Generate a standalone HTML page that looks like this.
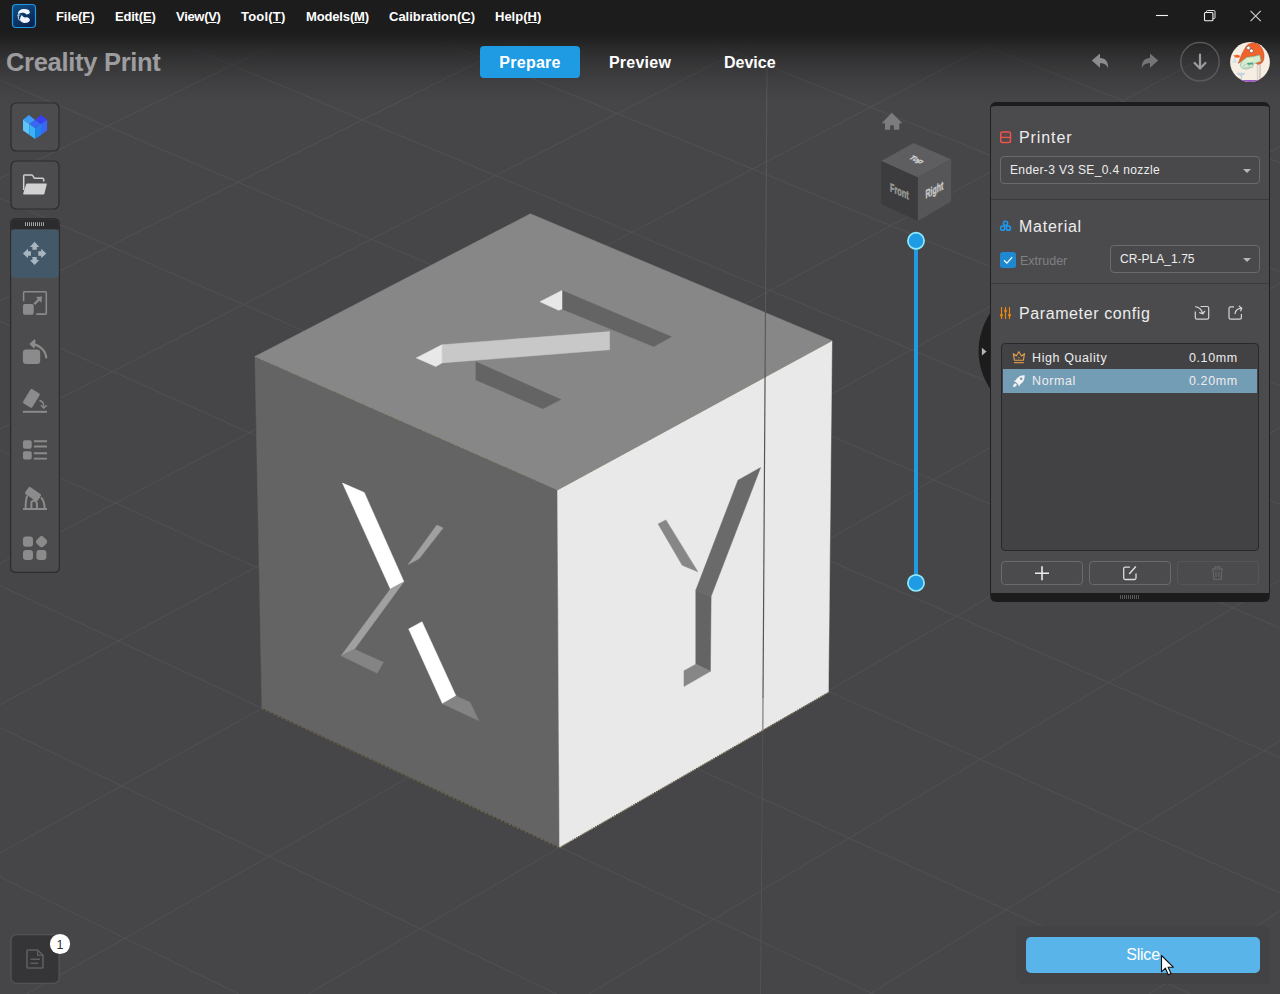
<!DOCTYPE html>
<html lang="en">
<head>
<meta charset="utf-8">
<title>Creality Print</title>
<style>
*{box-sizing:border-box;margin:0;padding:0}
html,body{width:1280px;height:994px;overflow:hidden;background:#464648}
body{position:relative;font-family:"Liberation Sans","Noto Sans CJK SC",sans-serif;color:#e6e6e6;-webkit-font-smoothing:antialiased}
.abs{position:absolute}
#scene{position:absolute;left:0;top:0;width:1280px;height:994px}
#titlebar{position:absolute;left:0;top:0;width:1280px;height:32px;background:#1c1c1d}
#hdrgrad{position:absolute;left:0;top:32px;width:1280px;height:72px;background:linear-gradient(to bottom,rgba(28,28,29,1) 0%,rgba(28,28,29,.86) 11%,rgba(28,28,29,.67) 22%,rgba(28,28,29,.46) 37.5%,rgba(28,28,29,.29) 54%,rgba(28,28,29,.145) 71%,rgba(28,28,29,.05) 87.5%,rgba(28,28,29,0) 100%)}
.menu{position:absolute;top:0;height:32px;line-height:33.4px;font-weight:bold;font-size:13px;color:#fff;white-space:nowrap}
.menu u{text-decoration:underline;text-underline-offset:1px}
#brand{position:absolute;left:6px;top:44px;font-weight:bold;font-size:25.5px;line-height:36px;color:#9d9d9f;white-space:nowrap;letter-spacing:-.3px}
.tab{position:absolute;top:46px;height:32px;line-height:33.4px;font-weight:bold;font-size:16px;color:#fff;text-align:center;white-space:nowrap}
#tabPrepare{left:480px;width:100px;background:#1e9be2;border-radius:4px}
.sbtn{position:absolute;left:11px;width:48px;height:48px;background:#4b4b4d;border:1px solid #2c2c2e;border-radius:5px}
#toolbar{position:absolute;left:11px;top:219px;width:48px;height:353px;background:#4b4b4d;border:1px solid #2c2c2e;border-radius:5px;overflow:hidden}
#toolbar .grip{position:absolute;left:0;top:0;width:46px;height:10px;background:#2a2a2c}
#toolbar .sel{position:absolute;left:0;top:10px;width:46px;height:48px;background:#43596a;border-radius:4px}
#panel{position:absolute;left:990px;top:102px;width:280px;height:500px;background:#4b4b4d;border:1px solid #1f1f21;border-top:4px solid #1c1c1d;border-bottom:9px solid #1c1c1d;border-radius:6px;overflow:visible}
.ptitle{position:absolute;left:28px;font-size:16px;color:#ededed;white-space:nowrap;line-height:20px}
.sep{position:absolute;left:0;width:278px;height:1px;background:#3a3a3c}
.combo{position:absolute;height:28px;border:1px solid #6b6b6d;border-radius:4px;background:#49494b;font-size:12px;line-height:27.5px;color:#ededed;padding-left:9px;white-space:nowrap}
.combo:after{content:"";position:absolute;right:8.3px;top:11.5px;border:4.2px solid transparent;border-top:4.2px solid #b6b6b6;border-bottom:0}
#list{position:absolute;left:10px;top:237px;width:258px;height:208px;background:#424244;border:1px solid #28282a;border-radius:4px}
.row{position:absolute;left:1px;width:254px;height:23.5px;line-height:24px;font-size:12.5px;color:#ededed;letter-spacing:.6px}
.row .n{position:absolute;left:29px;top:0}
.row .v{position:absolute;left:186px;top:0}
.pbtn{position:absolute;top:455px;width:82px;height:24px;border:1px solid #6b6b6d;border-radius:4px}
</style>
</head>
<body>
<svg id="scene" viewBox="0 0 1280 994">
<rect width="1280" height="994" fill="#464648"/>
<path d="M809.3 3461.2L4842.6 -48.2M809.3 3461.2L-4233.6 175.0M589.9 3318.2L4676.3 -98.5M998.6 3296.5L-4050.9 111.8M377.4 3179.8L4513.2 -147.9M1180.6 3138.1L-3872.7 50.1M171.7 3045.7L4353.0 -196.4M1355.7 2985.8L-3698.9 -10.1M-27.8 2915.7L4195.8 -244.0M1524.3 2839.1L-3529.2 -68.8M-221.1 2789.7L4041.5 -290.7M1686.8 2697.7L-3363.6 -126.2M-408.7 2667.5L3889.9 -336.6M1843.4 2561.5L-3201.9 -182.2M-590.7 2548.9L3741.1 -381.6M1994.4 2430.0L-3043.9 -236.9M-767.5 2433.7L3594.9 -425.9M2140.3 2303.1L-2889.5 -290.3M-939.2 2321.8L3451.3 -469.4M2281.2 2180.6L-2738.7 -342.5M-1106.0 2213.1L3310.1 -512.1M2417.3 2062.1L-2591.2 -393.6M-1268.2 2107.4L3171.4 -554.1M2549.0 1947.5L-2447.0 -443.5M-1425.9 2004.6L3035.1 -595.4M2676.4 1836.7L-2305.9 -492.3M-1579.4 1904.6L2901.1 -635.9M2799.8 1729.3L-2167.9 -540.1M-1728.7 1807.3L2769.4 -675.8M2919.2 1625.4L-2032.9 -586.9M-1874.1 1712.6L2639.8 -715.0M3035.0 1524.6L-1900.8 -632.6M-2015.7 1620.3L2512.4 -753.6M3147.3 1426.9L-1771.4 -677.4M-2153.7 1530.4L2387.1 -791.6M3256.2 1332.2L-1644.7 -721.3M-2288.2 1442.7L2263.9 -828.9M3361.9 1240.2L-1520.6 -764.2M-2419.3 1357.3L2142.6 -865.6M3464.5 1151.0L-1399.0 -806.3M-2547.1 1274.0L2023.2 -901.7M3564.2 1064.2L-1279.9 -847.6M-2671.9 1192.7L1905.8 -937.3M3661.0 980.0L-1163.2 -888.0M-2793.6 1113.4L1790.2 -972.3M3755.2 898.1L-1048.8 -927.6M-2912.4 1036.0L1676.5 -1006.7M3846.7 818.4L-936.6 -966.4M-3028.4 960.4L1564.5 -1040.6M3935.8 740.9L-826.6 -1004.5M-3141.7 886.5L1454.2 -1074.0M4022.5 665.4L-718.7 -1041.9M-3252.4 814.4L1345.6 -1106.9M4106.9 592.0L-612.9 -1078.5M-3360.6 743.9L1238.6 -1139.3M4189.1 520.5L-509.0 -1114.5M-3466.3 675.0L1133.3 -1171.1M4269.2 450.8L-407.1 -1149.7M-3569.7 607.6L1029.5 -1202.6M4347.2 382.9L-307.1 -1184.4M-3670.8 541.7L927.3 -1233.5M4423.3 316.7L-208.9 -1218.4M-3769.7 477.3L826.6 -1264.0M4497.5 252.1L-112.5 -1251.8M-3866.5 414.2L727.4 -1294.0M4569.9 189.1L-17.8 -1284.5M-3961.2 352.5L629.6 -1323.7M4640.6 127.6L75.2 -1316.7M-4053.9 292.1L533.2 -1352.8M4709.5 67.6L166.5 -1348.4M-4144.7 233.0L438.1 -1381.6M4776.9 9.1L256.3 -1379.4M-4233.6 175.0L344.5 -1410.0M4842.6 -48.2L344.5 -1410.0" stroke="#515154" stroke-width="1" fill="none"/>
<!-- vertical axis line lower part -->
<path d="M762.8 730L760.5 994" stroke="#535356" stroke-width="1" fill="none"/>
<!-- cube -->
<g id="cube">
<polygon points="254.9,356.5 557.5,489.9 559.5,847.5 261.9,708.3" fill="#646464" stroke="#646464" stroke-width=".5" stroke-linejoin="round"/>
<polygon points="557.5,489.9 832,340.7 828.4,692.3 559.5,847.5" fill="#e9e9e9" stroke="#e9e9e9" stroke-width=".5" stroke-linejoin="round"/>
<polygon points="254.9,356.5 530.4,213.8 832,340.7 557.5,489.9" fill="#878787" stroke="#878787" stroke-width=".5" stroke-linejoin="round"/>
<!-- Z -->
<polygon points="562,290.4 671.4,336.8 653.7,346.6 562,309" fill="#646464" stroke="#646464" stroke-width=".5" stroke-linejoin="round"/>
<polygon points="540,301.7 562,290.4 562,309 558.6,310.3" fill="#e8e8e8" stroke="#e8e8e8" stroke-width=".5" stroke-linejoin="round"/>
<polygon points="441.9,344.8 609.6,331.6 609.6,349.7 441.9,362.9" fill="#c8c8c8" stroke="#c8c8c8" stroke-width=".5" stroke-linejoin="round"/>
<polygon points="416.3,357.9 441.9,344.8 441.9,362.9 435.8,366.5" fill="#e8e8e8" stroke="#e8e8e8" stroke-width=".5" stroke-linejoin="round"/>
<polygon points="475.9,361.8 560.9,399.6 542.7,408.7 475.9,379.9" fill="#646464" stroke="#646464" stroke-width=".5" stroke-linejoin="round"/>
<!-- X -->
<polygon points="342.5,483.1 364.2,492.4 403.9,581.7 390.4,589" fill="#ffffff" stroke="#ffffff" stroke-width=".5" stroke-linejoin="round"/>
<polygon points="436.9,525.1 443.1,527.9 419.2,558.6 408.2,564.5" fill="#a0a0a0" stroke="#a0a0a0" stroke-width=".5" stroke-linejoin="round"/>
<polygon points="390.4,589 403.9,581.7 354.4,649.3 341.1,655.8" fill="#a0a0a0" stroke="#a0a0a0" stroke-width=".5" stroke-linejoin="round"/>
<polygon points="341.1,655.8 354.4,649.3 383.4,662.3 377.2,673.2" fill="#848484" stroke="#848484" stroke-width=".5" stroke-linejoin="round"/>
<polygon points="408.7,629 422,621.7 456,696 442.5,703.7" fill="#ffffff" stroke="#ffffff" stroke-width=".5" stroke-linejoin="round"/>
<polygon points="442.5,703.7 456,696 470.1,702.3 478.6,720.6" fill="#848484" stroke="#848484" stroke-width=".5" stroke-linejoin="round"/>
<!-- Y -->
<polygon points="738,480.2 760.6,467.6 711.1,596.3 695.8,590.3" fill="#6a6a6a" stroke="#6a6a6a" stroke-width=".5" stroke-linejoin="round"/>
<polygon points="658.1,523.9 665.9,519.9 697.8,571.7 682.2,565.2" fill="#878787" stroke="#878787" stroke-width=".5" stroke-linejoin="round"/>
<polygon points="695.8,590.3 711.1,596.3 710.4,671.3 695.8,664.3" fill="#646464" stroke="#646464" stroke-width=".5" stroke-linejoin="round"/>
<polygon points="684,670.8 695.8,664.3 710.4,671.3 684,686.4" fill="#878787" stroke="#878787" stroke-width=".5" stroke-linejoin="round"/>
<path d="M261.900 708.300L559.500 847.500L828.400 692.300" stroke="#4a3a34" stroke-width="1" fill="none" stroke-dasharray="1.1 1.1"/>
<path d="M261.900 708.800L559.500 848L828.400 692.800" stroke="#8e8a2c" stroke-width=".9" fill="none" stroke-dasharray="1 3.400"/>
<path d="M254.900 356.500L557.500 489.900L832 340.700" stroke="#aaa24a" stroke-width=".8" fill="none" stroke-dasharray="1.200 5.500 1.200 2.500" stroke-opacity=".75"/>
</g>
<path d="M767 62L765.1 370" stroke="#58585b" stroke-width="1.1" fill="none"/><path d="M765.1 370L763 698" stroke="#555558" stroke-width="1.2" fill="none"/><path d="M763 698L762.8 730" stroke="#8c8c8c" stroke-width="1.4" fill="none"/>
</svg>
<div id="hdrgrad"></div>
<div id="titlebar"></div>
<svg class="abs" style="left:0;top:0" width="60" height="32" viewBox="0 0 60 32">
<defs><linearGradient id="icg" x1="0" y1="0" x2="0.6" y2="1"><stop offset="0" stop-color="#0f5288"/><stop offset="1" stop-color="#0a2450"/></linearGradient></defs>
<rect x="12.5" y="4.5" width="23" height="23" rx="3.5" fill="url(#icg)" stroke="#1f97ea" stroke-width="1.2"/>
<path d="M18 13.6C18.2 10.9 20.6 9.2 24.2 9.1C27.3 9 29.6 10.2 29.9 12.2C30 13.6 28.3 14.3 26.5 14.5C25.6 13.3 24 12.7 22.2 12.8C20.5 12.9 19 13.5 18.4 14.3Z" fill="#f4f7ff"/>
<path d="M22 15C22.6 16.6 23.8 17.4 25.2 17.4C26 17.4 26.6 17.2 27.2 17.3C28.6 17.6 29.8 18.8 29.9 19.9C29.6 21.6 27.5 22.9 24.8 22.9C22.4 22.9 20.6 21.5 20.1 19.9C19.8 18.3 20.6 16.2 22 15Z" fill="#f0f4ff"/>
<path d="M18.1 14.6L18.5 18.8L19.8 20.6" stroke="#e8eefc" stroke-width="0.9" fill="none"/>
<path d="M17.2 15.4L20.6 14.4M18.2 14.2L19.6 16" stroke="#dfe8fa" stroke-width="0.5" fill="none"/>
</svg>
<div class="menu" style="left:56px;letter-spacing:-.08px">File(<u>F</u>)</div>
<div class="menu" style="left:115px;letter-spacing:-.2px">Edit(<u>E</u>)</div>
<div class="menu" style="left:176px;letter-spacing:-.31px">View(<u>V</u>)</div>
<div class="menu" style="left:241px;letter-spacing:.2px">Tool(<u>T</u>)</div>
<div class="menu" style="left:306px;letter-spacing:-.15px">Models(<u>M</u>)</div>
<div class="menu" style="left:389px">Calibration(<u>C</u>)</div>
<div class="menu" style="left:495px">Help(<u>H</u>)</div>
<svg class="abs" style="left:1140px;top:0" width="140" height="32" viewBox="0 0 140 32" fill="none">
<path d="M16 15.5H28" stroke="#f2f2f2" stroke-width="1.1"/>
<path d="M66.5 12.3V11.6Q66.5 10.5 67.6 10.5H73.9Q75 10.5 75 11.6V17.5Q75 18.6 73.9 18.6H73" stroke="#e2e2e2" stroke-width="1"/>
<rect x="64.5" y="12.5" width="8.4" height="8.3" rx="1" stroke="#f2f2f2" stroke-width="1.1"/>
<path d="M110.5 10.8L120.8 21.2M120.8 10.8L110.5 21.2" stroke="#cfcfcf" stroke-width="1.1"/>
</svg>

<div id="brand">Creality Print</div>
<div class="tab" id="tabPrepare" style="letter-spacing:.25px">Prepare</div>
<div class="tab" style="left:608px;width:64px;letter-spacing:.25px">Preview</div>
<div class="tab" style="left:724px;width:51px">Device</div>
<svg class="abs" style="left:1080px;top:36px" width="200" height="52" viewBox="0 0 200 52">
<!-- undo -->
<path d="M11.8 24.6L20 17.6V22C25.6 22.2 28.4 25.4 28.2 32.6C27 28.9 24.6 27.4 20 27.3V31.7Z" fill="#8c8c8e"/>
<!-- redo -->
<path d="M78.2 24.6L70 17.6V22C64.4 22.2 61.6 25.4 61.8 32.6C63 28.9 65.400 27.4 70 27.3V31.7Z" fill="#747476"/>
<circle cx="120" cy="25.8" r="19.2" fill="none" stroke="#58585a" stroke-width="1.5"/>
<path d="M120 18.6V32M114.6 27L120 32.6L125.400 27" stroke="#9c9c9e" stroke-width="2.2" fill="none" stroke-linecap="round" stroke-linejoin="round"/>
<!-- avatar -->
<defs><clipPath id="avc"><circle cx="170" cy="26" r="19.900"/></clipPath></defs>
<g clip-path="url(#avc)">
<rect x="149" y="5" width="42" height="42" fill="#f6eee3"/>
<path d="M161.9 43.9 L177.9 43.9 L177.9 46.9 L161.9 46.9 Z" fill="#9a5bc2"/>
<path d="M177.4 28.6 L177.4 44.3 M179.3 28.6 L179.3 44.3 M180.5 28.6 L180.5 44.3" stroke="#c9bcbc" stroke-width=".7" fill="none"/>
<path d="M151.6 26.7 L157.6 26.7 L155.4 23.3 L154.0 23.3 Z" fill="#cfdfee"/>
<path d="M154.5 23.3 L155.2 21.1" stroke="#b7a9a0" stroke-width=".5"/>
<path d="M157.1 37.3 L164.8 37.3 L161.4 40.2 Z" fill="#c2dcf0" stroke="#9fb6cc" stroke-width=".4"/>
<path d="M161.4 40.2 L161.4 44.3" stroke="#a9b9c9" stroke-width=".7"/>
<path d="M158.3 27.4 L161.9 17.9 L165.3 11.7 C166.8 8.8 170.2 6.6 174.0 6.8 C178.9 7.3 182.7 11.7 183.9 17.9 C184.6 23.7 182.7 27.6 178.9 28.3 C176.9 28.6 175.7 27.6 176.9 26.2 L179.8 18.9 L173.1 20.8 L166.8 21.3 L161.5 25.2 Z" fill="#f0642c" stroke="#b8441a" stroke-width=".5" stroke-linejoin="round"/>
<path d="M153.2 19.5 L157.4 18.8 L160.7 20.0 L158.8 21.7 L155.4 21.4 L154.5 20.6 Z" fill="#f0642c"/>
<path d="M166.8 21.3 L173.1 20.6 L179.8 18.9 L181.0 25.2 L173.5 27.8 L172.6 31.0 L166.3 33.2 L162.2 32.2 L160.3 29.3 L161.9 25.2 Z" fill="#d3ebcf" stroke="#7fb592" stroke-width=".7" stroke-linejoin="round"/>
<path d="M167.3 22.8 L172.1 22.0 L173.1 24.7 L167.3 25.7 Z" fill="#e4f2c4"/>
<path d="M166.8 27.1 L173.1 26.6 L172.8 28.5 L168.2 28.8 Z" fill="#4a9f83"/>
<path d="M163.9 29.1 C165.3 28.3 169.2 29.1 170.2 30.3 C168.7 31.5 165.3 31.7 163.6 30.5 Z" fill="#f6eee3" stroke="#8fc0a0" stroke-width=".6"/>
<circle cx="168.5" cy="11.9" r="1.900" fill="#fff" stroke="#5b3a2c" stroke-width=".5"/>
<circle cx="171.4" cy="14.8" r="1.900" fill="#fff" stroke="#5b3a2c" stroke-width=".5"/>
</g>
</svg>

<svg class="abs" style="left:0;top:96px" width="70" height="484" viewBox="0 96 70 484">
<!-- button 1 -->
<rect x="11" y="103" width="48" height="48" rx="5" fill="#4c4c4e" stroke="#2c2c2e" stroke-width="1.2"/>
<polygon points="23,119.700 28.900,114.900 35.100,119.900 29.400,124" fill="#3a9cf8"/>
<polygon points="35.100,119.900 41,114.900 47.100,119.700 41,124" fill="#3a3ff5"/>
<polygon points="29.400,124 35.100,119.900 41,124 35.100,128.200" fill="#3a66f6"/>
<polygon points="23,119.700 29.400,124 29.400,134.900 23,130.400" fill="#5cc5fb"/>
<polygon points="29.400,124 35.100,128.200 35.100,138.900 29.400,134.900" fill="#38b3f9"/>
<polygon points="35.100,128.200 41,124 41,134.900 35.100,138.900" fill="#1e86ea"/>
<polygon points="41,124 47.100,119.700 47.100,130.400 41,134.900" fill="#3a66f6"/>
<!-- button 2 -->
<rect x="11" y="161" width="48" height="48" rx="5" fill="#4c4c4e" stroke="#2c2c2e" stroke-width="1.2"/>
<path d="M23.700 190V176Q23.700 175.100 24.600 175.100H31.600Q32.300 175.100 32.700 175.700L34.300 178.200H42.400Q43.700 178.200 43.700 179.500V181.600" fill="none" stroke="#cfcfcf" stroke-width="1.500" stroke-linejoin="round"/>
<path d="M27.300 183.400H46.200Q47.100 183.400 46.800 184.300L44.400 193.700Q44.200 194.500 43.300 194.500H23.800Q22.900 194.500 23.200 193.600L26.100 184.200Q26.400 183.400 27.300 183.400Z" fill="#d2d2d2"/>
<!-- toolbar -->
<path d="M16 218.600H54Q59.400 218.600 59.400 224V567Q59.400 572.400 54 572.400H16Q10.600 572.400 10.600 567V224Q10.600 218.600 16 218.600Z" fill="#4c4c4e" stroke="#2c2c2e" stroke-width="1.200"/>
<path d="M16 219.200H54Q58.800 219.200 58.800 224V229.600H11.200V224Q11.200 219.200 16 219.200Z" fill="#2b2b2d"/>
<path d="M25.500 222.200V226M27.500 222.200V226M29.500 222.200V226M31.500 222.200V226M33.500 222.200V226M35.500 222.200V226M37.500 222.200V226M39.500 222.200V226M41.500 222.200V226M43.500 222.200V226" stroke="#c4c4c4" stroke-width=".8"/>
<rect x="11.300" y="229.600" width="47.400" height="48.400" rx="4" fill="#43596a"/>
<!-- move -->
<g fill="#a9b5be">
<path d="M34.600 241.800L39.300 246.900H36.800V249.800H32.400V246.900H29.900Z"/>
<path d="M34.600 265.100L39.300 260H36.800V257.100H32.400V260H29.900Z"/>
<path d="M22.900 253.500L28 248.800V251.300H30.900V255.700H28V258.200Z"/>
<path d="M46.300 253.500L41.200 248.800V251.300H38.300V255.700H41.200V258.200Z"/>
</g>
<!-- scale -->
<g stroke="#8b8b8b" fill="none" stroke-width="1.550">
<path d="M23.600 301.300V292.800Q23.600 291.700 24.700 291.700H45.200Q46.300 291.700 46.300 292.800V313Q46.300 314.100 45.200 314.100H36.300"/>
<path d="M34.300 304.300L39.800 298.600" stroke-width="2.300"/>
</g>
<rect x="23" y="304" width="10.700" height="10.700" rx="1.800" fill="#8b8b8b"/>
<polygon points="35.900,297.100 42,296.500 41.400,302.800" fill="#8b8b8b"/>
<!-- rotate -->
<rect x="22.900" y="349.600" width="17.300" height="14.400" rx="3.200" fill="#8b8b8b"/>
<path d="M46.200 357.500C45.800 351 40 345 32.200 344.100" stroke="#8b8b8b" stroke-width="2.200" fill="none" stroke-linecap="round"/>
<path d="M34.700 340.200L30.300 344L34.100 347.300Z" stroke="#8b8b8b" stroke-width="1.600" fill="#8b8b8b" stroke-linecap="round" stroke-linejoin="round"/>
<!-- lay flat -->
<rect x="-8.300" y="-5.400" width="16.600" height="10.800" rx="1.600" fill="#8b8b8b" transform="translate(31.400,398.400) rotate(-58.400)"/>
<path d="M22.900 411.800H47" stroke="#8b8b8b" stroke-width="2"/>
<path d="M39.400 400.500C42.500 401 44 403.500 43.800 407.500" stroke="#8b8b8b" stroke-width="1.300" fill="none"/>
<path d="M40.900 405.200L43.800 408L46.800 405.200" stroke="#8b8b8b" stroke-width="1.300" fill="none"/>
<!-- list -->
<rect x="23" y="440.300" width="8.700" height="8.400" rx="1.800" fill="#8b8b8b"/>
<rect x="23" y="451.200" width="8.700" height="8.400" rx="1.800" fill="#8b8b8b"/>
<path d="M33.900 441.300H47M33.900 446.500H47M33.900 453.200H47M33.900 458.600H47" stroke="#8b8b8b" stroke-width="1.900"/>
<!-- support -->
<rect x="-7.500" y="-4.300" width="15" height="8.600" rx="1.500" fill="#8b8b8b" transform="translate(33.100,494.100) rotate(34.800)"/>
<path d="M23 509H47" stroke="#8b8b8b" stroke-width="2"/>
<path d="M27.200 495.500C26 499 25.600 503 25.600 508.500M31.400 501.500V508.500M36.900 502.500V508.500M41 497.500C43.300 499.500 44.500 503 44.600 508.500" stroke="#8b8b8b" stroke-width="2" fill="none"/>
<path d="M31.400 502Q34 498.500 36.900 503" stroke="#8b8b8b" stroke-width="2" fill="none"/>
<!-- apps -->
<rect x="23" y="536.600" width="10" height="10.100" rx="3" fill="#8b8b8b"/>
<rect x="-4.750" y="-4.750" width="9.500" height="9.500" rx="3.100" fill="#8b8b8b" transform="translate(41.600,541.700) rotate(45)"/>
<rect x="23" y="549.900" width="10" height="10.100" rx="3" fill="#8b8b8b"/>
<rect x="36.400" y="549.900" width="10" height="10.100" rx="3" fill="#8b8b8b"/>
</svg>

<svg class="abs" style="left:870px;top:105px" width="100" height="500" viewBox="870 105 100 500">
<!-- home -->
<path d="M891.800 112.800L902.300 123.300H899.300V129.700H893.900V126.600Q893.900 125 892 125Q890.200 125 890.200 126.600V129.700H885V123.300H881.700Z" fill="#7c7c7e"/>
<!-- cube -->
<polygon points="881.100,161.100 913.600,143 951.100,159.300 917.900,177.400" fill="#5e5e60"/>
<polygon points="881.100,161.100 917.900,177.400 917.900,220.900 881.100,204" fill="#3c3c3e"/>
<polygon points="917.900,177.400 951.100,159.300 951.100,201.600 917.900,220.900" fill="#565658"/>
<g font-family="'Liberation Sans','Noto Sans CJK SC',sans-serif" font-weight="bold" text-anchor="middle">
<text transform="matrix(.60 .266 -.62 .345 914.2 161)" font-size="12" fill="#d6d6d6" stroke="#d6d6d6" stroke-width=".5">Top</text>
<text transform="matrix(.61 .27 0 1 899.300 195.500)" font-size="12" fill="#9b9b9b" stroke="#9b9b9b" stroke-width=".45">Front</text>
<text transform="matrix(.58 -.316 0 1 934.400 194)" font-size="12" fill="#c9c9c9" stroke="#c9c9c9" stroke-width=".45">Right</text>
</g>
<!-- slider -->
<rect x="914" y="241" width="4" height="342" fill="#1e9be2"/>
<circle cx="916" cy="240.800" r="8.100" fill="#1e9be2" stroke="#8eeaff" stroke-width="1.700"/>
<circle cx="916" cy="582.900" r="8.100" fill="#1e9be2" stroke="#8eeaff" stroke-width="1.700"/>
</svg>

<svg class="abs" style="left:970px;top:300px" width="30" height="100" viewBox="970 300 30 100">
<path d="M990.500 312.500C982.500 325 978.600 338 978.600 351.200C978.600 364.500 982.500 377 990.500 389.500Z" fill="#1c1c1d"/>
<polygon points="981.900,347.800 986.600,351.600 981.900,355.400" fill="#b4b4b4"/>
</svg>
<div id="panel">
<svg class="abs" style="left:0;top:0" width="278" height="484" viewBox="991 106 278 484" fill="none">
<!-- printer icon -->
<rect x="1000.700" y="131.900" width="9.800" height="10.600" rx="1.800" stroke="#f2524c" stroke-width="1.450"/>
<path d="M1000.600 137.400H1010.600" stroke="#f2524c" stroke-width="1.300"/>
<path d="M1004.600 135H1006.600" stroke="#c2413d" stroke-width=".8"/>
<!-- material icon -->
<circle cx="1005.500" cy="223.300" r="2.100" stroke="#1e9bf0" stroke-width="1.500"/>
<circle cx="1002.700" cy="228.200" r="2.100" stroke="#1e9bf0" stroke-width="1.500"/>
<circle cx="1008.400" cy="228.200" r="2.100" stroke="#1e9bf0" stroke-width="1.500"/>
<!-- checkbox -->
<rect x="1000" y="252" width="16" height="16" rx="2.500" fill="#1e88d0"/>
<path d="M1004 260.300L1006.900 263.100L1012.200 257.200" stroke="#fff" stroke-width="1.250"/>
<!-- param icon -->
<path d="M1001.500 307V319M1005.500 307V319M1009.500 307V319" stroke="#f0860a" stroke-width="1.100"/>
<circle cx="1001.500" cy="315.200" r="1.400" fill="#f0860a"/><circle cx="1005.500" cy="311" r="1.400" fill="#f0860a"/><circle cx="1009.500" cy="315.200" r="1.400" fill="#f0860a"/>
<!-- import -->
<path d="M1200.500 306.500H1207Q1208.700 306.500 1208.700 308.200V317.500Q1208.700 319.200 1207 319.200H1197Q1195.300 319.200 1195.300 317.500V311.500" stroke="#d4d4d4" stroke-width="1.200"/>
<path d="M1195.300 306.700C1198.600 307 1201.300 309.300 1202.600 313.200M1199.200 312.500L1202.900 313.900L1204.900 310.800" stroke="#d4d4d4" stroke-width="1.250" stroke-linejoin="round"/>
<!-- export -->
<path d="M1234 306.800H1230.700Q1229 306.800 1229 308.500V317.500Q1229 319.200 1230.700 319.200H1239.700Q1241.400 319.200 1241.400 317.500V314" stroke="#d4d4d4" stroke-width="1.200"/>
<path d="M1235 314C1235.300 310.800 1237.600 308.600 1241.300 308.200M1238.800 305.900L1241.800 308.200L1240.500 311.200" stroke="#d4d4d4" stroke-width="1.250" stroke-linejoin="round"/>
</svg>
<div class="ptitle" style="top:22px;letter-spacing:.9px">Printer</div>
<div class="combo" style="left:9px;top:50px;width:260px;letter-spacing:.36px">Ender-3 V3 SE_0.4 nozzle</div>
<div class="sep" style="top:93px"></div>
<div class="ptitle" style="top:110.5px;letter-spacing:.75px">Material</div>
<div class="abs" style="left:29px;top:147px;font-size:12.500px;line-height:16px;color:#808082;white-space:nowrap">Extruder</div>
<div class="combo" style="left:119px;top:139px;width:150px;letter-spacing:.05px">CR-PLA_1.75</div>
<div class="sep" style="top:177px"></div>
<div class="ptitle" style="top:198px;letter-spacing:.6px">Parameter config</div>
<div id="list">
<div class="row" style="top:1.5px"><span class="n">High Quality</span><span class="v">0.10mm</span></div>
<div class="row" style="top:25px;height:24px;background:#739cb5"><span class="n">Normal</span><span class="v">0.20mm</span></div>
<svg class="abs" style="left:8px;top:6px" width="20" height="42" viewBox="1010 350 20 42" fill="none">
<path d="M1014.400 360.200L1013.300 353.700L1016.300 356L1018.900 351.700L1021.500 356L1024.500 353.700L1023.400 360.200Z" stroke="#e9a14e" stroke-width="1.100" stroke-linejoin="round"/>
<path d="M1014 362.700H1023.800" stroke="#e9a14e" stroke-width="1.100"/>
<path d="M1018.900 357V358.600" stroke="#e9a14e" stroke-width=".9"/>
<!-- rocket -->
<path d="M1024.600 375.200C1020.500 375 1017.300 377 1015.800 380.200L1013.600 380.800L1016 382.200L1018 384.200L1019.300 386.600L1020 384.400C1023.100 382.900 1025 379.500 1024.600 375.200Z" fill="#f4f4f4"/>
<circle cx="1021.200" cy="378.700" r="1.300" fill="#739cb5"/>
<path d="M1015.400 383.300C1013.800 383.700 1013.200 385.200 1013.100 387.100C1015 387 1016.400 386.400 1016.900 384.800Z" fill="#f4f4f4"/>
</svg>
</div>
<div class="pbtn" style="left:10px"></div>
<div class="pbtn" style="left:98px;width:82px"></div>
<div class="pbtn" style="left:186px;width:82px;border-color:#565658"></div>
<svg class="abs" style="left:0;top:450px" width="278" height="45" viewBox="991 556 278 45" fill="none">
<path d="M1035 573.200H1049M1042 566.200V580.200" stroke="#ececec" stroke-width="1.600"/>
<path d="M1130 567.200H1125.200Q1123.700 567.200 1123.700 568.700V578Q1123.700 579.500 1125.200 579.500H1134.500Q1136 579.500 1136 578V573.500" stroke="#dcdcdc" stroke-width="1.300"/>
<path d="M1129.200 574L1135.800 566.600" stroke="#dcdcdc" stroke-width="1.500"/>
<g stroke="#68686a" stroke-width="1.100">
<path d="M1211.800 569H1223.200M1215.200 568.800V566.900H1219.800V568.800M1213 569.200L1213.800 579.300H1221.200L1222 569.200M1216 571.500V577M1219 571.500V577"/>
</g>
<path d="M1120.500 595V599M1122.500 595V599M1124.500 595V599M1126.500 595V599M1128.500 595V599M1130.500 595V599M1132.500 595V599M1134.500 595V599M1136.500 595V599M1138.500 595V599" stroke="#6a6a6c" stroke-width=".8"/>
</svg>
</div>

<svg class="abs" style="left:0;top:920px" width="90" height="74" viewBox="0 920 90 74">
<rect x="11" y="934.800" width="48" height="48.400" rx="5" fill="#353537" stroke="#58585a" stroke-width="1.1"/>
<path d="M27 950.800Q27 950 27.800 950H37.600L43 955.400V967.200Q43 968 42.200 968H27.800Q27 968 27 967.200Z" fill="none" stroke="#5e5e60" stroke-width="1.600" stroke-linejoin="round"/>
<path d="M37.600 950V955.400H43" fill="none" stroke="#5e5e60" stroke-width="1.300"/>
<path d="M30.500 959.300H40M30.500 963.300H38" stroke="#5e5e60" stroke-width="1.500"/>
<circle cx="60" cy="944" r="10.100" fill="#ffffff"/>
<text x="60" y="948.600" font-family="'Liberation Sans','Noto Sans CJK SC',sans-serif" font-size="12.500" fill="#2e2e30" text-anchor="middle">1</text>
</svg>
<div class="abs" style="left:1016px;top:926px;width:254px;height:58px;background:#434345;border-radius:6px"></div>
<div class="abs" style="left:1026px;top:937px;width:234px;height:36px;background:#59b4ea;border-radius:5px;color:#fff;font-size:16px;line-height:36px;text-align:center;letter-spacing:-.2px"><span style="position:relative;left:0px">Slice</span></div>
<svg class="abs" style="left:1158px;top:952px" width="20" height="26" viewBox="0 0 20 26">
<path d="M3.500 3.500V19.800L7.400 16.200L10.300 22.800L13 21.600L10.100 15.200H15.300Z" fill="#fff" stroke="#111" stroke-width="1.100" stroke-linejoin="round"/>
</svg>

</body>
</html>
